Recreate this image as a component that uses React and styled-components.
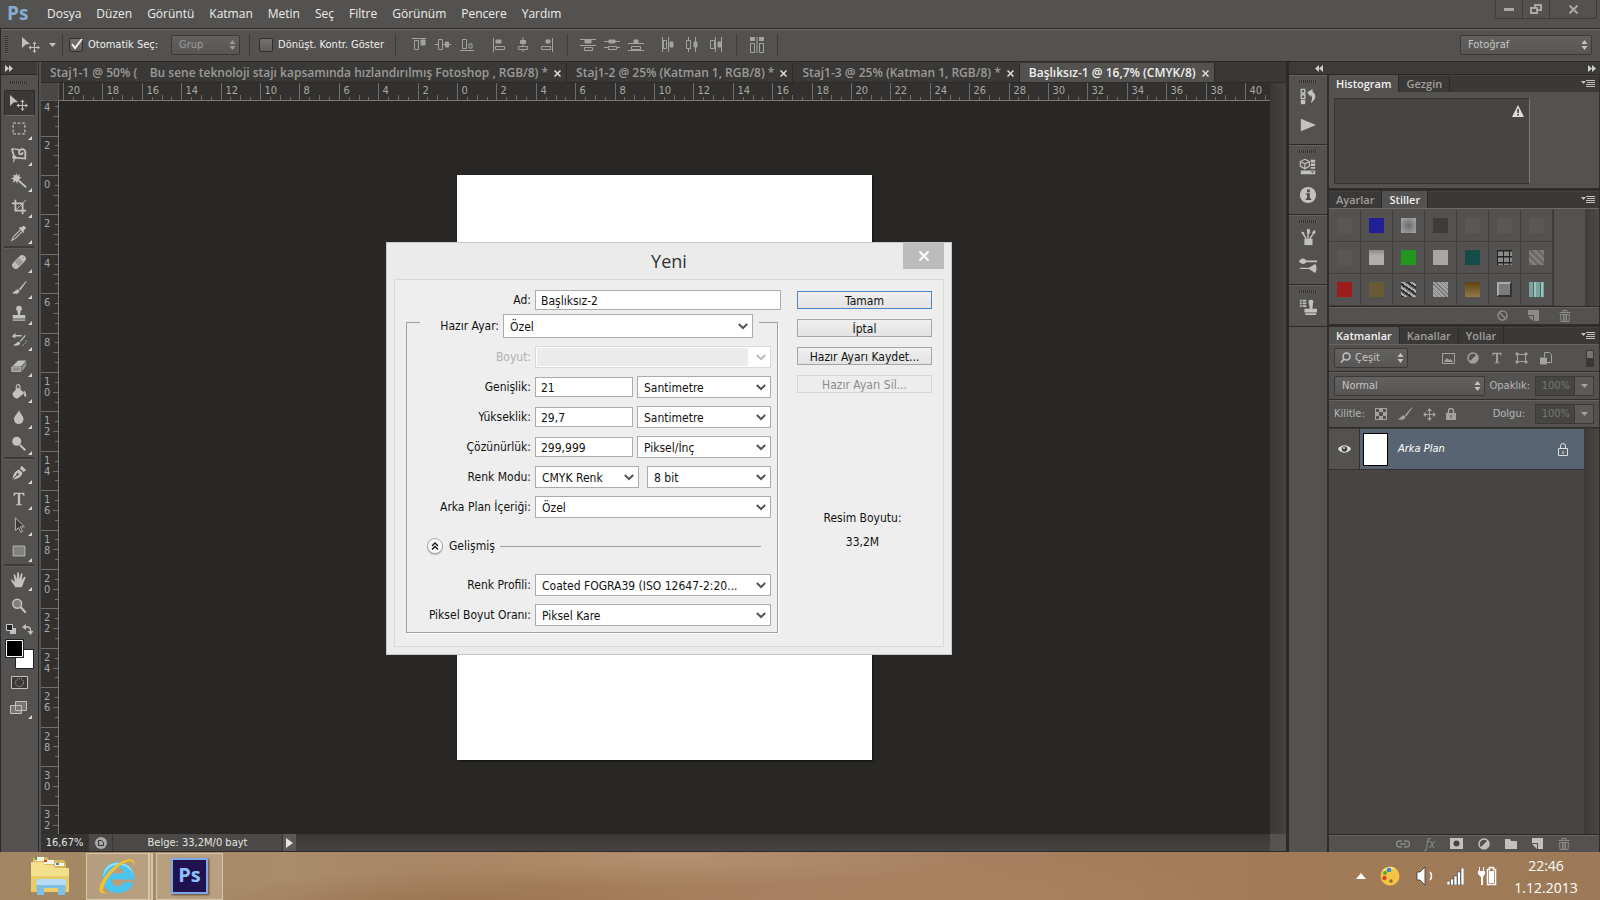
import React from 'react';
import styled, { createGlobalStyle, css } from 'styled-components';

const GlobalStyle = createGlobalStyle`
* {
    box-sizing: border-box;
}

body {
    margin: 0;
    background: #282725;
    color: #dddcda;
    font: 12px/16px "Open Sans", "Noto Sans", sans-serif;
}

button, input, select {
    font: inherit;
    color: inherit;
    margin: 0;
}

button {
    display: flex;
    align-items: center;
    justify-content: center;
    padding: 0;
    border: 0;
    background: none;
}

svg {
    display: block;
    flex: none;
}
`

const tahoma = css`
    font-family: "DejaVu Sans Condensed", "DejaVu Sans", sans-serif;
    font-size: 11px;
`

const Shell = styled.div`
    display: flex;
    flex-direction: column;
    min-height: 100vh;
    background: #535250;
`

/* ---------- menu + options bar ---------- */

const MenuBar = styled.header`
    display: flex;
    height: 29px;
    padding-left: 7px;
    border-bottom: 1px solid #2b2a29;
`

const Logo = styled.div`
    width: 32px;
    color: #86abd4;
    font: bold 19px/26px "Open Sans", sans-serif;
`

const Menus = styled.nav`
    display: flex;
    flex: 1;
    align-items: center;
    gap: 15px;
    padding-left: 8px;
    height: 28px;

    a {
        color: #eeedeb;
        text-decoration: none;
    }
`

const WindowButtons = styled.div`
    display: flex;
    height: 19px;
    margin-right: 3px;
    border: 1px solid #3d3c3a;
    border-top: 0;
    border-radius: 0 0 3px 3px;
    color: #a9a8a6;

    button {
        width: 27px;
        border-right: 1px solid #3d3c3a;
    }
    button:last-child {
        width: 46px;
        border-right: 0;
    }
`

const OptionsBar = styled.div`
    display: flex;
    align-items: center;
    height: 33px;
    padding: 0 8px 0 4px;
    border-left: 1px solid #2b2a29;
    border-bottom: 1px solid #2b2a29;
    box-shadow: inset 0 1px #6b6a68;
    color: #a3a2a0;

    label {
        ${tahoma}
        color: #f0efed;
    }
    label[for="auto"] {
        margin-right: 13px;
    }
`

const Grip = styled.div`
    flex: none;
    width: ${p => p.$vertical ? '3px' : '18px'};
    height: ${p => p.$vertical ? '18px' : '3px'};
    background: repeating-linear-gradient(${p => p.$vertical ? '180deg' : '90deg'}, #31302f 0 1px, #5e5d5b 1px 2px);
`

const Divider = styled.i`
    width: 1px;
    height: 22px;
    margin: 0 ${p => p.$gap || '8px'};
    background: #3d3c3a;
`

const Spacer = styled.div`
    flex: 1;
`

const CheckBox = styled.input.attrs({ type: 'checkbox' })`
    appearance: none;
    width: 14px;
    height: 14px;
    margin-right: 5px;
    border: 1px solid #2f2e2d;
    border-radius: 2px;
    background: linear-gradient(#737270, #5c5b59);
`

const Tick = styled.span`
    position: relative;
    display: flex;

    svg {
        position: absolute;
        left: 1px;
        top: -1px;
        pointer-events: none;
    }
`

const CurrentTool = styled.button`
    gap: 9px;
    height: 24px;
    margin-left: 14px;
    color: #c2c1bf;
`

const IconGroup = styled.div`
    display: flex;
    margin-left: ${p => p.$gap ? '8px' : 0};

    button {
        width: 24px;
        height: 24px;
    }
`

const DarkSelectWrap = styled.div`
    position: relative;
    display: flex;
    width: ${p => p.$width};
    flex: ${p => p.$grow ? 1 : 'none'};
    height: 20px;
    color: ${p => p.$dim ? '#9c9b99' : '#c6c5c3'};

    select {
        ${tahoma}
        appearance: none;
        width: 100%;
        padding: 0 18px 0 ${p => p.$inset || '7px'};
        border: 1px solid #3a3938;
        border-radius: 2px;
        background: linear-gradient(#62615f, #575654);
    }
    svg {
        position: absolute;
        right: 4px;
        top: 5px;
        pointer-events: none;
    }
    svg + svg {
        right: auto;
        left: 6px;
        top: 4px;
    }
`

/* ---------- workspace ---------- */

const Workspace = styled.div`
    display: flex;
    flex: 1;
`

const ToolBar = styled.aside`
    display: flex;
    flex-direction: column;
    align-items: center;
    width: 39px;
    padding-right: 1px;
    border-left: 1px solid #2b2a29;
    border-right: 1px solid #2b2a29;
`

const Strip = styled.div`
    display: flex;
    align-items: center;
    width: 100%;
    height: 13px;
    padding: 0 4px;
    border-bottom: 1px solid #2b2a29;
    background: #3c3b39;
    color: #d0cfcd;
`

const Tool = styled.button`
    position: relative;
    width: 31px;
    height: 26px;
    color: #c2c1bf;
    border-radius: 2px;
    ${p => p.$active && css`
        background: #3b3a39;
        border: 1px solid #2c2b2a;
        border-bottom-color: #6c6b69;
    `}
    ${p => p.$more && css`
        &::after {
            content: '';
            position: absolute;
            right: 3px;
            bottom: 2px;
            border: 2px solid #d6d5d3;
            border-top-color: transparent;
            border-left-color: transparent;
        }
    `}
`

const ToolRule = styled.hr`
    width: 30px;
    height: 3px;
    margin: 0;
    border: solid #5e5d5b;
    border-width: 0 0 1px;
    background: #3c3b39;
`

const SmallRow = styled.div`
    display: flex;
    gap: 6px;
    height: ${p => p.$tall ? '20px' : '15px'};
    align-items: center;
    color: #c2c1bf;
`

const Document = styled.main`
    display: flex;
    flex-direction: column;
    flex: 1;
    min-width: 0;
    margin-left: 2px;
    border-right: 3px solid #2b2a29;
    background: #403f3d;
`

const Tabs = styled.div`
    display: flex;
    height: 21px;
    padding-top: 1px;
    border-bottom: 1px solid #2b2a29;
    background: #3a3937;
`

const Tab = styled.button`
    gap: 6px;
    padding: 1px 5px 0 9px;
    border-right: 1px solid #2b2a29;
    color: ${p => p.$active ? '#f0efed' : '#9b9a98'};
    background: ${p => p.$active ? '#535250' : 'transparent'};
    font-weight: 600;
    white-space: nowrap;

    span {
        white-space: pre;
    }
    svg {
        color: #dddcda;
    }
`

const Board = styled.div`
    display: grid;
    grid-template: 18px 1fr / 18px 1fr 16px;
    flex: 1;
    background: #403f3d;
`

const Corner = styled.div`
    background: #494846;
    border: dotted #6b6a68;
    border-width: 0 1px 1px 0;
`

const RulerSvg = styled.svg`
    width: 100%;
    height: 100%;
    background: #32312f;
    overflow: hidden;
    border: solid #7b7a78;
    border-width: ${p => p.$side ? '0 1px 0 0' : '0 0 1px 0'};
    grid-row: ${p => p.$side ? 2 : 1};
    grid-column: ${p => p.$side ? 1 : 2};

    line {
        stroke: #6f6e6c;
        shape-rendering: crispEdges;
    }
    text {
        ${tahoma}
        fill: #a9a8a6;
    }
`

const ScrollTrack = styled.div`
    grid-row: 1 / 3;
    grid-column: 3;
    background: linear-gradient(90deg, #393836, #454442);
`

const Canvas = styled.div`
    display: flex;
    align-items: center;
    justify-content: center;
    background: #282725;
`

const Sheet = styled.div`
    width: 415px;
    height: 585px;
    background: #fff;
    box-shadow: 1px 1px 2px #111;
`

const StatusBar = styled.footer`
    ${tahoma}
    display: flex;
    height: 18px;
    border-bottom: 1px solid #2b2a29;
    background: linear-gradient(#393836, #454442);
    color: #e6e5e3;

    > * {
        display: flex;
        align-items: center;
        justify-content: center;
        border-right: 1px solid #3a3938;
        background: #4a4947;
    }
    > span:first-child {
        width: 48px;
        background: #353432;
    }
    > button {
        width: 24px;
    }
    > output {
        width: 170px;
    }
    > button:last-of-type {
        width: 13px;
        border: 0;
        background: #5a5957;
    }
    > i {
        flex: 1;
        border: 0;
        background: none;
    }
    > b {
        width: 16px;
        border: 0;
        background: #555452;
    }
`

/* ---------- right hand panels ---------- */

const Side = styled.aside`
    display: grid;
    grid-template: 13px 1fr / 38px 271px;
    column-gap: 2px;
    background: #2f2e2d;

    > ${Strip}:first-child {
        grid-column: 1 / 3;
        justify-content: space-between;
        padding: 0 4px 0 26px;
    }
`

const Dock = styled.div`
    background: #535250;
`

const DockGroup = styled.div`
    display: flex;
    flex-direction: column;
    align-items: center;
    padding: 4px 0 5px;
    border-bottom: 1px solid #2b2a29;
    border-top: 1px solid #646361;

    button {
        width: 30px;
        height: 28px;
        color: #c2c1bf;
    }
`

const Panels = styled.div`
    display: flex;
    flex-direction: column;
    gap: 3px;
    padding-right: 1px;
`

const Panel = styled.section`
    display: flex;
    flex-direction: column;
    flex: ${p => p.$grow ? 1 : 'none'};
    background: #535250;
`

const PanelTabs = styled.div`
    display: flex;
    align-items: stretch;
    height: 17px;
    background: #3a3937;
    box-shadow: inset 0 1px #454442;

    > span {
        display: flex;
        align-items: center;
        justify-content: flex-end;
        flex: 1;
        padding-right: 4px;
        color: #c2c1bf;
    }
`

const PanelTab = styled.button`
    padding: 0 7px;
    border-right: 1px solid #2b2a29;
    font-weight: 600;
    font-size: 11px;
    color: ${p => p.$active ? '#f0efed' : '#a09f9d'};
    background: ${p => p.$active ? '#535250' : 'transparent'};
`

const Histogram = styled.div`
    display: flex;
    justify-content: flex-end;
    width: 196px;
    height: 86px;
    margin: 6px 0 4px 5px;
    padding: 6px 5px;
    border: 1px solid #343332;
    border-right-color: #7b7a78;
    background: #464543;
`

const StyleBox = styled.div`
    display: flex;
    height: 98px;
    border-top: 1px solid #6b6a68;

    > i {
        width: 32px;
        border-left: 1px solid #3a3938;
    }
    > b {
        flex: 1;
        background: linear-gradient(90deg, #3e3d3b, #4b4a48);
    }
`

const StyleGrid = styled.div`
    display: grid;
    grid-template-columns: repeat(7, 32px);
    grid-auto-rows: 32px;
    padding-top: 1px;
`

const Swatch = styled.button`
    border: solid #403f3d;
    border-width: 0 1px 1px 0;

    &::before {
        content: '';
        width: 15px;
        height: 15px;
        background: ${p => p.$fill};
    }
`

const IconFooter = styled.div`
    display: flex;
    align-items: center;
    justify-content: flex-end;
    height: 18px;
    padding-right: ${p => p.$inset};
    gap: ${p => p.$gap};
    border-top: 1px solid #2b2a29;
    box-shadow: inset 0 1px #646361;
    color: #8b8a88;
`

const LayerRow = styled.div`
    display: flex;
    align-items: center;
    gap: ${p => p.$gap || '5px'};
    height: 28px;
    padding: 0 5px;
    border-bottom: 1px solid #2f2e2d;
    border-top: 1px solid #646361;
    color: #a3a2a0;

    label {
        ${tahoma}
        color: #b7b6b4;
    }
`

const Percent = styled.div`
    display: flex;
    height: 20px;
    border: 1px solid #3a3938;

    input {
        ${tahoma}
        width: 38px;
        padding: 0 4px;
        border: 0;
        text-align: right;
        background: #464543;
        color: #767573;
    }
    button {
        width: 19px;
        background: #5c5b59;
        border-left: 1px solid #3a3938;
    }
`

const LayerList = styled.div`
    display: flex;
    flex: 1;
    border-top: 1px solid #3a3938;
    background: #464543;

    > div {
        flex: 1;
    }
    > i {
        width: 15px;
        background: linear-gradient(90deg, #3a3937, #484745);
    }
`

const Layer = styled.div`
    display: flex;
    align-items: center;
    height: 41px;
    padding-right: 16px;
    border-bottom: 1px solid #343332;
    background: #596472;
    color: #dddcda;

    > button {
        width: 31px;
        height: 40px;
        border-right: 1px solid #343332;
        background: #535250;
    }
    > i {
        width: 25px;
        height: 33px;
        margin: 0 10px 0 3px;
        border: 1px solid #000;
        background: #fff;
    }
    > em {
        ${tahoma}
        flex: 1;
        color: #fff;
    }
`

/* ---------- dialog ---------- */

const Dialog = styled.form`
    ${tahoma}
    font-size: 12px;
    position: absolute;
    left: 386px;
    top: 242px;
    width: 566px;
    padding: 0 7px 7px;
    border: 1px solid #c6c6c6;
    background: #ebebeb;
    color: #111;
`

const DialogTitle = styled.div`
    display: grid;
    grid-template-columns: 41px 1fr 41px;
    height: 36px;

    h1 {
        margin: 0;
        color: #333;
        font: 18px/36px "Open Sans", sans-serif;
        text-align: center;
    }
    button {
        height: 26px;
        background: #bcbcbc;
        color: #fff;
    }
`

const DialogBody = styled.div`
    display: flex;
    justify-content: space-between;
    padding: 10px 11px 13px;
    border: 1px solid #d9d9d9;
    background: #eee;
`

const FormColumn = styled.div`
    display: flex;
    flex-direction: column;
`

const NameRow = styled.div`
    display: grid;
    grid-template-columns: 125px 246px;
    column-gap: 4px;
    align-items: center;

    label {
        text-align: right;
    }
`

const Group = styled.div`
    width: 372px;
    margin-top: 12px;
    padding-bottom: 6px;
    border: 1px solid #a0a0a0;
    box-shadow: 1px 1px #fff;
`

const GroupHead = styled.div`
    display: grid;
    grid-template-columns: 79px 250px;
    column-gap: 4px;
    align-items: center;
    margin: -9px 18px 8px 13px;
    background: #eee;

    label {
        text-align: right;
    }
`

const Row = styled.div`
    display: grid;
    grid-template-columns: 124px ${p => p.$cols || '236px'};
    column-gap: 4px;
    align-items: center;
    height: 22px;
    margin-bottom: ${p => p.$last ? 0 : '8px'};

    label:first-child {
        text-align: right;
        color: ${p => p.$dim ? '#b0b0b0' : 'inherit'};
        white-space: nowrap;
    }
`

const ModeCells = styled.div`
    display: grid;
    grid-template-columns: 104px 124px;
    column-gap: 8px;
`

const TextBox = styled.input`
    width: 100%;
    height: 20px;
    padding: 2px 5px 0;
    border: 1px solid #ababab;
    background: #fff;
`

const SelectWrap = styled.div`
    position: relative;

    select {
        appearance: none;
        display: block;
        width: 100%;
        height: ${p => p.$tall ? '24px' : '22px'};
        padding: 2px 18px 0 6px;
        border: 1px solid ${p => p.$dim ? '#d9d9d9' : '#ababab'};
        border-radius: 0;
        background: #fff;
        opacity: 1;
        ${p => p.$dim && css`
            box-shadow: inset 1px 1px #fff, inset 0 -1px #fff;
            background: linear-gradient(90deg, #ebebeb 212px, #fff 212px);
        `}
    }
    svg {
        position: absolute;
        right: 5px;
        top: ${p => p.$tall ? '9px' : '8px'};
        color: ${p => p.$dim ? '#bbb' : '#555'};
        pointer-events: none;
    }
`

const Advanced = styled.div`
    display: flex;
    align-items: center;
    height: 20px;
    margin: 18px 16px 18px 20px;

    button {
        width: 16px;
        height: 16px;
        margin-right: 6px;
        border: 1px solid #a9a9a9;
        border-radius: 50%;
        background: #fbfbfb;
        box-shadow: 0 1px 1px #bbb;
    }
    hr {
        flex: 1;
        margin: 0 0 0 5px;
        border: 0;
        border-top: 1px solid #a0a0a0;
    }
`

const ButtonColumn = styled.div`
    display: flex;
    flex-direction: column;
    gap: 10px;
    width: 135px;
    padding-top: 1px;

    p {
        margin: 0;
        padding-right: 4px;
        text-align: center;
        line-height: 14px;
    }
    p:first-of-type {
        margin-top: 108px;
    }
`

const DialogButton = styled.button`
    height: 18px;
    padding-top: 1px;
    border: 1px solid ${p => p.$primary ? '#4a86c5' : '#a5a5a5'};
    background: linear-gradient(#f0f0f0, #e3e3e3);
    &:disabled {
        border-color: #d6d6d6;
        background: #ededed;
        color: #8c8c8c;
    }
`

/* ---------- taskbar ---------- */

const TaskBar = styled.footer`
    display: flex;
    align-items: center;
    height: 48px;
    color: #fff;
    background:
        radial-gradient(ellipse 260px 40px at 28% 120%, #9a7350, transparent),
        radial-gradient(ellipse 300px 30px at 42% 10%, #b3906e, transparent),
        radial-gradient(ellipse 240px 40px at 62% 90%, #a8825d, transparent),
        linear-gradient(90deg, #a08762, #a98c69 18%, #a57f5b 36%, #a88261 55%, #a17b57 80%, #9d7a57);
`

const TaskButton = styled.button`
    width: 67px;
    height: 47px;
    margin-right: 3px;
    ${p => p.$open && css`
        border: 1px solid #d6c5ae;
        background: rgba(225, 210, 190, 0.3);
    `}
    ${p => p.$stack && css`
        padding-right: 1px;
        border-right: 5px double #d6c5ae;
    `}
    &:first-child {
        width: 70px;
        margin: 0 1px 0 15px;
    }
`

const PsTile = styled.span`
    width: 37px;
    height: 36px;
    border: 2px solid #7fa8e8;
    background: #20124f;
    color: #8ec2ff;
    font: bold 20px/30px "Open Sans", sans-serif;
    box-shadow: 1px 1px 2px #5a452f;
`

const Tray = styled.div`
    display: flex;
    align-items: center;
    gap: 14px;
    margin-right: 20px;
`

const Clock = styled.time`
    width: 68px;
    padding-top: 1px;
    text-align: center;
    font: 14px/22px "Open Sans", sans-serif;

    span {
        display: block;
    }
`

/* ---------- icons ---------- */

function Icon({ w = 20, h = 20, box, children, ...rest }) {
    return (
        <svg width={w} height={h} viewBox={box || `0 0 ${w} ${h}`} fill="currentColor" aria-hidden="true" {...rest}>
            {children}
        </svg>
    )
}

const stroke = { fill: 'none', stroke: 'currentColor' }

const Cross = ({ size = 6, weight = 1.5 }) => (
    <Icon w={size} h={size} {...stroke} strokeWidth={weight}>
        <path d={`M.5.5L${size - .5} ${size - .5}M${size - .5}.5L.5 ${size - .5}`} />
    </Icon>
)
const UpDown = () => <Icon w={7} h={10}><path d="M3.500 0L6.500 4h-6zM3.500 10L6.500 6h-6z" /></Icon>
const Down = () => <Icon w={7} h={4}><path d="M0 0h7L3.500 4z" /></Icon>
const Chevron = () => <Icon w={10} h={7} {...stroke} strokeWidth="2"><path d="M.8 1L5 5 9.200 1" /></Icon>
const Double = ({ flip }) => (
    <Icon w={8} h={7}>{flip ? <path d="M4 0v7L0 3.500zM8 0v7L4 3.500z" /> : <path d="M0 0v7l4-3.500zM4 0v7l4-3.500z" />}</Icon>
)
const MenuIcon = () => <Icon w={14} h={8}><path d="M0 1h5L2.500 4zM5 0h9v1H5zM6 2h8v1H6zM5 4h9v1H5zM5 6h9v1H5z" /></Icon>
const Trash = () => <Icon w={12} h={12} {...stroke}><path d="M.5 2.500h11M4 2V.5h4V2M1.500 4.500h9l-.5 7H2zM4.500 5v6M6 5v6M7.500 5v6" /></Icon>
const NewPage = props => <Icon w={11} h={11} {...props}><path d="M0 0h11v11H6V5H0zM0 6h5v5z" /></Icon>
const Lock = () => <Icon w={10} h={12}><path d="M0 5h10v7H0z" /><path d="M2.500 5V3a2.500 2.500 0 015 0v2" {...stroke} strokeWidth="1.500" /><path d="M4.500 7h1v3h-1z" fill="#535250" /></Icon>
const Half = props => <Icon w={12} h={12} {...props}><circle cx="6" cy="6" r="5" {...stroke} strokeWidth="1.500" /><path d="M9.500 2.500a5 5 0 01-7 7z" /></Icon>
const Move = () => (
    <Icon w={18} h={16}>
        <path d="M0 0l8 7-4.500.4L0 11z" />
        <path d="M12.500 6v9M8 10.500h9" {...stroke} strokeWidth="1" />
        <path d="M12.500 4.500l2 2.500h-4zM12.500 16l2-2.500h-4zM6.500 10.500l2.500-2v4zM18 10.500l-2.500-2v4z" />
    </Icon>
)

const brush = <path d="M18 2l-8 9 1.500 1.500L18 3.500zM9 11.500c-3 .2-3 3-7 4 4 2 8.500 1 8.500-2.500z" />

const toolIcons = {
    marquee: <path d="M3.500 3.500h13v12h-13z" {...stroke} strokeDasharray="3 2" strokeWidth="1.300" />,
    lasso: <g {...stroke}><path d="M2 3l3 10 12 1V7c0-5-7-4-7 0 0 3 4 3 4 0" strokeWidth="2" /><path d="M2 3l8 1M5 11c-4 1-1 4 1 3s-1-4-1-2l-1 6" strokeWidth="1.300" /></g>,
    wand: <g><path d="M7 1l1 3 3-2-1 3 3 1-3 2 2 3-3-1-1 3-1.500-3L3 12l1-3.500L1 7l3.500-1L3 3l3 1z" /><path d="M10 10l8 7" {...stroke} strokeWidth="2" /></g>,
    crop: <g {...stroke} strokeWidth="2"><path d="M6 2v12h12M2 6h12v12" /><path d="M6 14L18 2" strokeWidth="1" /></g>,
    dropper: <g><path d="M10 5l5 5 1-1-1-1 3-4-3-2-3 2-1-1z" /><path d="M11.500 6.500L4 14l-2 4 4-2 7.500-7.500" {...stroke} strokeWidth="1.200" /></g>,
    heal: <g transform="rotate(-45 10 10)"><rect x="1" y="6" width="18" height="8" rx="4" /><rect x="6.500" y="6" width="7" height="8" fill="#a4a3a1" /><path d="M8 8.500h1M11 8.500h1M8 11.500h1M11 11.500h1M3 10h1M16 10h1" stroke="#444" /></g>,
    brush,
    stamp: <path d="M10 1a3 3 0 00-2 5.500L9 11H3v4h14v-4h-6l1-4.500A3 3 0 0010 1zM3 16h14v1.500H3z" />,
    history: <g><path d="M17 4l-6 7 1 1 5-6zM10 12c-3 0-3 3-7 3.500 4 2 8 .5 8.500-2.500zM2 6l4-4v2.500h7V6H6v2z" /><path d="M14 16c3-1 4-3 4-7" {...stroke} strokeDasharray="1.500 1.500" /></g>,
    eraser: <g><path d="M9 4h9l-5 6H3z" /><path d="M2 11h10v5H2z" fill="#8f8e8c" stroke="currentColor" /><path d="M13 11l5-6v5l-5 6z" fill="#8f8e8c" /></g>,
    bucket: <g><path d="M9 5l7 6-7 6c-3 1-7-3-6-6z" /><path d="M7 8V4c0-3 4-3 4 0v5" {...stroke} strokeWidth="1.300" /><path d="M15 9c3 0 3 3 3 6-2 1-3-1-2-4z" /></g>,
    drop: <path d="M10 1c1 4 5 6 5 10.500a5.300 5.300 0 01-10.600 0C4.400 7 9 5 10 1z" />,
    dodge: <g><circle cx="7.500" cy="7" r="5" /><path d="M11 11l6 6" {...stroke} strokeWidth="2.300" /></g>,
    pen: <g><path d="M3 17c0-5 2-9 7-11l4 4c-2 5-6 7-11 7z" /><path d="M11 5l2-3 5 5-3 2z" /><path d="M3 17l5-5" stroke="#444" /><circle cx="8.500" cy="11.500" r="1.200" fill="#333" /></g>,
    type: <path d="M4 3h12v4h-1c0-2-1-2.500-3.700-2.500v10c0 1.500.7 1.500 2.200 1.500v1h-7v-1c1.500 0 2.200 0 2.200-1.500v-10C6 4.500 5 5 5 7H4z" />,
    select: <path d="M6 2v14l3.500-3 2.500 5 2-1-2.500-5H16z" fill="#3a3938" stroke="currentColor" />,
    rect: <path d="M3.500 4.500h13v11h-13z" fill="#82817f" stroke="currentColor" />,
    hand: <path d="M6 18l-4.500-7c-1-2 1-2 2-.5L5.500 12 4 5c0-2 1.700-2 2 0l1.500 4L8 3c0-2 2-2 2 0l.4 6 1.600-5.500c.5-1.700 2-1 1.800.5L13 10l2.500-3c1-1.300 2.500 0 1.500 1.500-2 3-1.500 5-4 9.500z" />,
    zoom: <g><circle cx="8" cy="7.500" r="5" fill="#82817f" stroke="currentColor" strokeWidth="1.600" /><path d="M12 11.500l5.500 6" {...stroke} strokeWidth="2.500" /></g>,
}

const toolGroups = [
    ['marquee', 'lasso', 'wand', 'crop', 'dropper'],
    ['heal', 'brush', 'stamp', 'history', 'eraser', 'bucket', 'drop', 'dodge'],
    ['pen', 'type', 'select', 'rect'],
    ['hand', 'zoom'],
]

const alignIcons = [
    [
        <g {...stroke}><path d="M1 1.500h14M3.500 3.500h4v9h-4z" /><path d="M10 3h4v5h-4z" fill="currentColor" /></g>,
        <g {...stroke}><path d="M0 7.500h3M7 7.500h3M14 7.500h2M3.500 2.500h4v10h-4z" /><path d="M10.500 5h3v5h-3z" fill="currentColor" /></g>,
        <g {...stroke}><path d="M1 13.500h14M3.500 2.500h4v9h-4z" /><path d="M10 7h3v4h-3z" /></g>,
    ],
    [
        <g {...stroke}><path d="M2.500 1v14M4.500 9.500h9v3h-9z" /><path d="M5 3h5v3H5z" fill="currentColor" /></g>,
        <g {...stroke}><path d="M8 0v3M8 7v2M8 13v2M3.500 9.500h9v3h-9z" /><path d="M5.500 3.500h5v3h-5z" fill="currentColor" /></g>,
        <g {...stroke}><path d="M13.500 1v14M2.500 9.500h9v3h-9z" /><path d="M7 3h4v3H7z" fill="currentColor" /></g>,
    ],
    [
        <g {...stroke}><path d="M0 2.500h16M0 8.500h16M4.500 10.500h8v3h-8z" /><path d="M5 3h6v3H5z" fill="currentColor" /></g>,
        <g {...stroke}><path d="M0 4.500h16M0 10.500h4M12 10.500h4M4.500 9.500h8v3h-8z" /><path d="M5 3h6v3H5z" fill="currentColor" /></g>,
        <g {...stroke}><path d="M0 6.500h16M0 13.500h16M3.500 9.500h9v3h-9z" /><path d="M6 3h4v3H6z" fill="currentColor" /></g>,
    ],
    [
        <g {...stroke}><path d="M2.500 0v15M8.500 0v15M3.500 3.500h3v8h-3z" /><path d="M10 5h3v5h-3z" fill="currentColor" /></g>,
        <g {...stroke}><path d="M4.500 0v3M4.500 12v3M11.500 0v15M2.500 3.500h4v8h-4z" /><path d="M10 5h3v5h-3z" fill="currentColor" /></g>,
        <g {...stroke}><path d="M7.500 0v15M13.500 0v15M2.500 3.500h4v8h-4z" /><path d="M10 5h3v5h-3z" fill="currentColor" /></g>,
    ],
]

const dockIcons = [
    [
        <g><path d="M2.500 1.500h4v4h-4zM2.500 7.500h4v4h-4z" {...stroke} strokeWidth="1.500" /><path d="M2 13h5v5H2z" /><path d="M9 5l6-4v3c5 4 4 9-2 13 2-5 2-8 0-9.500V10z" /></g>,
        <path d="M2 3l17 7-17 7z" />,
    ],
    [
        <g><path d="M6.500 1.500l5 2.500v5l-5 3-5-3V4zM1.500 4l5 2.500L11.500 4M6.500 6.500V12" {...stroke} strokeWidth="1.300" /><path d="M13 2h5v3h-5zM13 6h5v3h-5zM13 10h5v2h-5zM2 14h16v4H2zM13 15l2 2 2-2z" fillRule="evenodd" /></g>,
        <g><circle cx="10" cy="10" r="9" /><path d="M9 4h3v3H9zM7.500 8H12v6h1.500v1.500h-6V14H9V9.500H7.500z" fill="#4a4947" /></g>,
    ],
    [
        <g><path d="M6 12h9v7H6z" /><path d="M8 12L4 5M10 12V3M12 12l4-6" {...stroke} strokeWidth="1.600" /><path d="M2 4l4 1-1 4zM9 1h3v5H9zM14 5l4-3v5z" /></g>,
        <g><path d="M0 6c2-4 6-4 8-1h12v2H8c-2 3-6 2-8-1zM1 13h10l7-4c2 2 2 8 0 10l-7-4.500H1z" /></g>,
    ],
    [
        <g><path d="M1 2h2v2H1zM4 2h4v2H4zM1 5h2v2H1zM4 5h4v2H4zM1 8h2v2H1zM4 8h4v2H4z" /><path d="M13 2a2.500 2.500 0 00-2 4l1 6H6v4h14v-4h-5l.5-6A2.500 2.500 0 0013 2zM7 17h12v2H7z" /></g>,
    ],
]

/* ---------- pieces ---------- */

const menus = ['Dosya', 'Düzen', 'Görüntü', 'Katman', 'Metin', 'Seç', 'Filtre', 'Görünüm', 'Pencere', 'Yardım']

const tabs = [
    'Staj1-1 @ 50% (    Bu sene teknoloji stajı kapsamında hızlandırılmış Fotoshop , RGB/8) *',
    'Staj1-2 @ 25% (Katman 1, RGB/8) *',
    'Staj1-3 @ 25% (Katman 1, RGB/8) *',
    'Başlıksız-1 @ 16,7% (CMYK/8)',
]

const stone = 'repeating-linear-gradient(35deg, #333 0 2px, #aaa 2px 4px, #666 4px 5px)'
const swatches = [
    '#585755', '#211f96', 'radial-gradient(#6b6b6b, #a9a9a9)', '#3d3c3a', '#595856', '#595856', '#595856',
    '#585755', 'linear-gradient(#8d8c8a, #b0afad 40%)', '#22961f', '#a7a6a4', '#174b47',
    'repeating-linear-gradient(90deg, #222 0 1px, transparent 1px 6px), repeating-linear-gradient(#222 0 1px, #8b8a88 2px 6px)',
    'repeating-linear-gradient(45deg, #6b6a68 0 3px, #82817f 3px 5px)',
    '#9d1d1d', '#695a36', stone, 'repeating-linear-gradient(45deg, #777 0 1px, #a5a5a5 1px 3px)',
    'linear-gradient(#5e4310, #93794a)',
    'linear-gradient(#7b7b7b, #7b7b7b) 2px 2px / 11px 11px no-repeat, linear-gradient(135deg, #aaa 50%, #333 50%)',
    'repeating-linear-gradient(90deg, #7ba39d 0 4px, #4c6662 4px 5px, #9cc4be 5px 7px)',
]

const STEP = 197 / 10

function Ruler({ side, zero, from, to }) {
    const marks = []
    for (let cm = from; cm <= to; cm += 0.5) {
        const pos = Math.round(zero + cm * STEP) + 0.5
        const major = cm % 2 === 0
        const size = major ? 18 : cm % 1 === 0 ? 5 : 3
        marks.push(side
            ? <line key={cm} x1={17 - size} x2="17" y1={pos} y2={pos} />
            : <line key={cm} y1={17 - size} y2="17" x1={pos} x2={pos} />)
        if (major) {
            const label = String(Math.abs(cm))
            if (side) {
                // keep the first digit inside the strip
                const top = Math.max(10, Math.ceil(pos) + 12)
                label.split('').forEach((digit, i) => marks.push(
                    <text key={cm + 't' + i} x="3" y={top + i * 11}>{digit}</text>
                ))
            } else {
                marks.push(<text key={cm + 't'} x={pos + 4} y="11">{label}</text>)
            }
        }
    }
    return <RulerSvg $side={side}>{marks}</RulerSvg>
}

function DarkSelect({ label, value, search, ...rest }) {
    return (
        <DarkSelectWrap {...rest}>
            <select aria-label={label} defaultValue={value}><option>{value}</option></select>
            <UpDown />
            {search && <Icon w={11} h={11} {...stroke} strokeWidth="1.500"><circle cx="6.500" cy="4.500" r="3.500" /><path d="M4 7l-3 3.500" /></Icon>}
        </DarkSelectWrap>
    )
}

function Select({ id, value, label, dim, tall }) {
    return (
        <SelectWrap $dim={dim} $tall={tall}>
            <select id={id} aria-label={label} disabled={dim} defaultValue={value}><option>{value}</option></select>
            <Chevron />
        </SelectWrap>
    )
}

function SizeRow({ id, label, value, unit }) {
    return (
        <Row $cols="98px 134px">
            <label htmlFor={id}>{label}</label>
            <TextBox id={id} defaultValue={value} />
            <Select label={label + ' birim'} value={unit} />
        </Row>
    )
}

function NewDialog() {
    return (
        <Dialog role="dialog" aria-labelledby="title" onSubmit={e => e.preventDefault()}>
            <DialogTitle>
                <span />
                <h1 id="title">Yeni</h1>
                <button type="button" aria-label="Kapat"><Cross size={10} weight={2.2} /></button>
            </DialogTitle>
            <DialogBody>
                <FormColumn>
                    <NameRow>
                        <label htmlFor="name">Ad:</label>
                        <TextBox id="name" defaultValue="Başlıksız-2" />
                    </NameRow>
                    <Group>
                        <GroupHead>
                            <label htmlFor="preset">Hazır Ayar:</label>
                            <Select id="preset" value="Özel" tall />
                        </GroupHead>
                        <Row $dim>
                            <label htmlFor="size">Boyut:</label>
                            <Select id="size" value="" dim />
                        </Row>
                        <SizeRow id="width" label="Genişlik:" value="21" unit="Santimetre" />
                        <SizeRow id="height" label="Yükseklik:" value="29,7" unit="Santimetre" />
                        <SizeRow id="res" label="Çözünürlük:" value="299,999" unit="Piksel/İnç" />
                        <Row>
                            <label htmlFor="mode">Renk Modu:</label>
                            <ModeCells>
                                <Select id="mode" value="CMYK Renk" />
                                <Select label="Bit" value="8 bit" />
                            </ModeCells>
                        </Row>
                        <Row $last>
                            <label htmlFor="bg">Arka Plan İçeriği:</label>
                            <Select id="bg" value="Özel" />
                        </Row>
                        <Advanced>
                            <button type="button" aria-label="Gelişmiş">
                                <Icon w={8} h={8} {...stroke} strokeWidth="1.400"><path d="M1 4l3-3 3 3M1 7.500l3-3 3 3" /></Icon>
                            </button>
                            Gelişmiş
                            <hr />
                        </Advanced>
                        <Row>
                            <label htmlFor="profile">Renk Profili:</label>
                            <Select id="profile" value="Coated FOGRA39 (ISO 12647-2:20..." />
                        </Row>
                        <Row $last>
                            <label htmlFor="ratio">Piksel Boyut Oranı:</label>
                            <Select id="ratio" value="Piksel Kare" />
                        </Row>
                    </Group>
                </FormColumn>
                <ButtonColumn>
                    <DialogButton $primary>Tamam</DialogButton>
                    <DialogButton type="button">İptal</DialogButton>
                    <DialogButton type="button">Hazır Ayarı Kaydet...</DialogButton>
                    <DialogButton type="button" disabled>Hazır Ayarı Sil...</DialogButton>
                    <p>Resim Boyutu:</p>
                    <p>33,2M</p>
                </ButtonColumn>
            </DialogBody>
        </Dialog>
    )
}

function Options() {
    return (
        <OptionsBar>
            <Grip $vertical />
            <CurrentTool aria-label="Taşı"><Move /><Down /></CurrentTool>
            <Divider $gap="6px" />
            <Tick>
                <CheckBox id="auto" defaultChecked />
                <Icon w={13} h={13} {...stroke} strokeWidth="2" color="#f0efed"><path d="M2 7l3 4 7-9" /></Icon>
            </Tick>
            <label htmlFor="auto">Otomatik Seç:</label>
            <DarkSelect label="Grup" value="Grup" $width="69px" $dim />
            <Divider $gap="9px" />
            <CheckBox id="transform" />
            <label htmlFor="transform">Dönüşt. Kontr. Göster</label>
            <Divider $gap="11px" />
            {alignIcons.map((group, i) => (
                <React.Fragment key={i}>
                    <IconGroup $gap={i % 2 === 1}>
                        {group.map((icon, j) => <button key={j} aria-label="Hizala"><Icon w={16} h={16}>{icon}</Icon></button>)}
                    </IconGroup>
                    {i % 2 === 1 && <Divider />}
                </React.Fragment>
            ))}
            <IconGroup>
                <button aria-label="Otomatik hizala">
                    <Icon w={16} h={18} {...stroke}><path d="M1.500 7.500h4v9h-4zM10.500 7.500h4v9h-4zM8 1v16" /><path d="M1 1h5v4H1zM10 1h5v4h-5z" fill="currentColor" stroke="none" /></Icon>
                </button>
            </IconGroup>
            <Divider />
            <Spacer />
            <DarkSelect label="Çalışma alanı" value="Fotoğraf" $width="132px" />
        </OptionsBar>
    )
}

function Tools() {
    return (
        <ToolBar>
            <Strip><Double /></Strip>
            <SmallRow><Grip /></SmallRow>
            <Tool $active aria-label="Taşı"><Move /></Tool>
            {toolGroups.map((group, i) => (
                <React.Fragment key={i}>
                    {i > 0 && <ToolRule />}
                    {group.map(name => (
                        <Tool key={name} $more={name !== 'zoom'} aria-label={name}>
                            <Icon w={18} h={18} box="0 0 20 20">{toolIcons[name]}</Icon>
                        </Tool>
                    ))}
                </React.Fragment>
            ))}
            <SmallRow $tall>
                <Icon w={10} h={10}><path d="M4 4h6v6H4z" /><path d="M.5.5h6v6h-6z" fill="#222" stroke="#ccc" /></Icon>
                <Icon w={11} h={11}><path d="M4 0v6L0 3zM8.500 11L5.500 7h6z" /><path d="M3 3h2.500a3 3 0 013 3v2" {...stroke} strokeWidth="1.300" /></Icon>
            </SmallRow>
            <Icon w={29} h={30}>
                <path d="M10.500 10.500h18v19h-18z" fill="#fff" stroke="#222" />
                <path d="M.5.5h18v18H.5z" fill="#000" stroke="#222" />
                <path d="M1.500 1.500h16v16h-16z" fill="#000" stroke="#fff" />
            </Icon>
            <Tool aria-label="Hızlı maske">
                <Icon w={17} h={13}><path d="M.5.5h16v12H.5z" fill="#3a3938" stroke="currentColor" /><circle cx="8.500" cy="6.500" r="4" {...stroke} strokeDasharray="1 1" /></Icon>
            </Tool>
            <Tool $more aria-label="Ekran modu">
                <Icon w={18} h={14}><path d="M.5 4.500h11v8H.5zM5.500.5h11v9h-11z" fill="#777674" stroke="currentColor" /></Icon>
            </Tool>
        </ToolBar>
    )
}

function PanelHead({ names, active }) {
    return (
        <PanelTabs>
            {names.map(name => <PanelTab key={name} $active={name === active}>{name}</PanelTab>)}
            <span><MenuIcon /></span>
        </PanelTabs>
    )
}

function PercentField({ id, label }) {
    return (
        <>
            <label htmlFor={id}>{label}:</label>
            <Percent><input id={id} defaultValue="100%" disabled /><button aria-label={label}><Down /></button></Percent>
        </>
    )
}

function LayersPanel() {
    return (
        <Panel $grow>
            <PanelHead names={['Katmanlar', 'Kanallar', 'Yollar']} active="Katmanlar" />
            <LayerRow $gap="12px">
                <DarkSelect label="Filtre" value="Çeşit" $width="74px" $inset="20px" search />
                <Spacer />
                <Icon w={13} h={11} {...stroke}><path d="M.5.5h12v10H.5z" /><path d="M2.500 8.500l2.500-3 2 2 1-1 2.500 2z" fill="currentColor" /></Icon>
                <Half />
                <Icon w={12} h={12} box="3 2 14 16">{toolIcons.type}</Icon>
                <Icon w={13} h={12} {...stroke}><path d="M2.500 2.500h8v7h-8z" /><path d="M1 1h2v2H1zM10 1h2v2h-2zM1 9h2v2H1zM10 9h2v2h-2z" fill="currentColor" /></Icon>
                <Icon w={12} h={13} {...stroke}><path d="M4.500 5V.5h5l2 2v8h-5" /><path d="M.5 6h6v6h-6z" fill="currentColor" /></Icon>
                <Spacer />
                <Icon w={8} h={17}><path d="M0 0h8v17H0z" fill="#3a3938" /><path d="M1 1h6v7H1z" fill="#777674" /></Icon>
            </LayerRow>
            <LayerRow>
                <DarkSelect label="Karışım modu" value="Normal" $grow />
                <PercentField id="opacity" label="Opaklık" />
            </LayerRow>
            <LayerRow $gap="10px">
                <label>Kilitle:</label>
                <Icon w={12} h={12}><path d="M0 0h12v12H0zM1 1v3h3V1zM8 1v3h3V1zM4 4v4h4V4zM1 8v3h3V8zM8 8v3h3V8z" fillRule="evenodd" /></Icon>
                <Icon w={16} h={16} box="1 1 18 18">{brush}</Icon>
                <Icon w={13} h={13}><path d="M6.500 0L9 3H4zM6.500 13L9 10H4zM0 6.500L3 4v5zM13 6.500L10 4v5z" /><path d="M6.500 2v9M2 6.500h9" {...stroke} /></Icon>
                <Lock />
                <Spacer />
                <PercentField id="fill" label="Dolgu" />
            </LayerRow>
            <LayerList>
                <div>
                    <Layer>
                        <button aria-label="Göster">
                            <Icon w={13} h={10}><path d="M0 5c3-5 10-5 13 0-3 5-10 5-13 0z" /><circle cx="6.500" cy="5" r="2.800" fill="#444" /><circle cx="6" cy="4" r="1" /></Icon>
                        </button>
                        <i />
                        <em>Arka Plan</em>
                        <Icon w={10} h={13} {...stroke}><path d="M.5 5.500h9v7h-9zM2.500 5V3a2.500 2.500 0 015 0v2M5 8v3" /></Icon>
                    </Layer>
                </div>
                <i />
            </LayerList>
            <IconFooter $inset="29px" $gap="15px">
                <Icon w={14} h={8} {...stroke} strokeWidth="1.500"><path d="M6 1H3.500a3 3 0 000 6H6M8 1h2.500a3 3 0 010 6H8M4 4h6" /></Icon>
                <em>fx</em>
                <Icon w={13} h={11} color="#c2c1bf"><path d="M0 0h13v11H0z" /><circle cx="6.500" cy="5.500" r="3" fill="#464543" /></Icon>
                <Half color="#c2c1bf" />
                <Icon w={12} h={10} color="#c2c1bf"><path d="M0 0h5l1 2h6v8H0z" /></Icon>
                <NewPage color="#c2c1bf" />
                <Trash />
            </IconFooter>
        </Panel>
    )
}

function SidePanels() {
    return (
        <Side>
            <Strip><Double flip /><Double /></Strip>
            <Dock>
                {dockIcons.map((group, i) => (
                    <DockGroup key={i}>
                        <Grip />
                        {group.map((icon, j) => <button key={j} aria-label="Panel"><Icon w={18} h={18} box="0 0 20 20">{icon}</Icon></button>)}
                    </DockGroup>
                ))}
            </Dock>
            <Panels>
                <Panel>
                    <PanelHead names={['Histogram', 'Gezgin']} active="Histogram" />
                    <Histogram>
                        <Icon w={12} h={12}><path d="M6 0l6 12H0z" /><path d="M5.300 4h1.500v4H5.300zM5.300 9h1.500v1.500H5.300z" fill="#333" /></Icon>
                    </Histogram>
                </Panel>
                <Panel>
                    <PanelHead names={['Ayarlar', 'Stiller']} active="Stiller" />
                    <StyleBox>
                        <StyleGrid>
                            {swatches.map((fill, i) => <Swatch key={i} $fill={fill} aria-label="Stil" />)}
                        </StyleGrid>
                        <i />
                        <b />
                    </StyleBox>
                    <IconFooter $inset="28px" $gap="20px">
                        <Icon w={11} h={11} {...stroke} strokeWidth="1.500"><circle cx="5.500" cy="5.500" r="4.500" /><path d="M2.500 2.500l6 6" /></Icon>
                        <NewPage />
                        <Trash />
                    </IconFooter>
                </Panel>
                <LayersPanel />
            </Panels>
        </Side>
    )
}

function Tasks() {
    return (
        <TaskBar>
            <TaskButton aria-label="Dosya Gezgini">
                <Icon w={40} h={40}>
                    <path d="M3 2l14-1 2 3h15l2 4v20H2z" fill="#d9b95a" />
                    <path d="M5 1h9v4H5zM14 4h10v4H14zM25 7h9v3h-9z" fill="#fbf8ea" />
                    <path d="M5 1h2v3H5z" fill="#3f9b45" /><path d="M14 4h3v2h-3z" fill="#d0433a" /><path d="M26 7h3v2h-3z" fill="#3b87cf" />
                    <path d="M1 6h12l2 3h8l2 3h14v24H1z" fill="#f3e08c" />
                    <path d="M1 20h38v16H1z" fill="#e8cd69" />
                    <path d="M8 23h26c2 0 2 2 2 3l-1 13h-7v-7H14v7H7L6 26c0-1 0-3 2-3z" fill="#7fbfe4" />
                    <path d="M8 23h26c2 0 2 2 2 3v3H6v-3c0-1 0-3 2-3z" fill="#b5dcf2" />
                </Icon>
            </TaskButton>
            <TaskButton $open $stack aria-label="Internet Explorer">
                <Icon w={38} h={37} box="1 0 38 38">
                    <path d="M38 22H14c1 5 3 7 7 7 3 0 5-1 6-4h10c-2 7-8 11-16 11C11 36 5 30 5 20S12 4 21 4s17 7 17 18zM14 16h13c0-4-2-6-6-6s-7 2-7 6z" fill="#4ac4f0" />
                    <path d="M21 5C12 5 6 11 6 19c3-8 8-12 15-12s12 3 16 10C35 9 29 5 21 5z" fill="#9be0f8" />
                    <path d="M37 9c3-6-1-9-8-7C18 5 4 20 2 31c-1 5 3 7 9 4-5 1-6-1-5-4C8 21 20 8 30 4c5-2 8 0 7 5z" fill="#f3c12b" />
                </Icon>
            </TaskButton>
            <TaskButton $open aria-label="Photoshop"><PsTile>Ps</PsTile></TaskButton>
            <Spacer />
            <Tray>
                <Icon w={10} h={6}><path d="M5 0l5 6H0z" /></Icon>
                <Icon w={20} h={20}>
                    <circle cx="10" cy="10" r="9.500" fill="#f6c445" />
                    <path d="M2 6a9.500 9.500 0 0114-3c-5-1-10 0-14 3z" fill="#fde79a" />
                    <circle cx="9" cy="4" r="2.300" fill="#2f8bc9" /><circle cx="5" cy="7" r="2" fill="#55a63a" /><circle cx="4.500" cy="12" r="2.200" fill="#d8432f" /><circle cx="11" cy="15" r="1.700" fill="#8a6a3a" />
                </Icon>
                <Icon w={19} h={20}><path d="M3 6h3l5-5v18l-5-5H3z" stroke="#333" strokeWidth=".8" /><path d="M16 6c2 2 2 6 0 8" {...stroke} strokeWidth="1.500" /></Icon>
                <Icon w={17} h={17} stroke="#333" strokeWidth=".5"><path d="M0 13h3v4H0zM3.500 11h3v6h-3zM7 8h3v9H7zM10.500 4h3v13h-3zM14 0h3v17h-3z" /></Icon>
                <Icon w={20} h={20}><path d="M9.500 3.500h2v-2h4v2h2v15h-8z" fill="none" stroke="#fff" strokeWidth="1.500" /><path d="M11 5h5v12h-5z" /><path d="M1 1h1v4H1zM5 1h1v4H5zM0 5h7v3l-2 3v8H3v-8L0 8z" /></Icon>
                <Clock><span>22:46</span><span>1.12.2013</span></Clock>
            </Tray>
        </TaskBar>
    )
}

function App() {
    return (
        <Shell>
            <GlobalStyle />
            <MenuBar>
                <Logo>Ps</Logo>
                <Menus>{menus.map(name => <a key={name} href="#">{name}</a>)}</Menus>
                <WindowButtons>
                    <button aria-label="Simge durumuna küçült"><Icon w={10} h={3}><path d="M0 0h10v3H0z" /></Icon></button>
                    <button aria-label="Önceki boyut"><Icon w={12} h={10} {...stroke} strokeWidth="2"><path d="M5 3V1h6v5H8M1 4h6v5H1z" /></Icon></button>
                    <button aria-label="Kapat"><Cross size={9} weight={2} /></button>
                </WindowButtons>
            </MenuBar>
            <Options />
            <Workspace>
                <Tools />
                <Document>
                    <Tabs>
                        {tabs.map((name, i) => <Tab key={name} $active={i === tabs.length - 1}><span>{name}</span><Cross size={7} /></Tab>)}
                    </Tabs>
                    <Board>
                        <Corner />
                        <Ruler zero={398} from={-20} to={41} />
                        <Ruler side zero={74} from={-4} to={33} />
                        <Canvas><Sheet /></Canvas>
                        <ScrollTrack />
                    </Board>
                    <StatusBar>
                        <span>16,67%</span>
                        <button aria-label="Durum"><Icon w={12} h={12}><circle cx="6" cy="6" r="6" fill="#a9a8a6" /><path d="M3.500 3.500h3l2 2v3h-5z" fill="none" stroke="#333" /></Icon></button>
                        <output>Belge: 33,2M/0 bayt</output>
                        <button aria-label="Bilgi"><Icon w={7} h={10}><path d="M0 0l7 5-7 5z" /></Icon></button>
                        <i />
                        <b />
                    </StatusBar>
                </Document>
                <SidePanels />
            </Workspace>
            <Tasks />
            <NewDialog />
        </Shell>
    )
}

export default App;
